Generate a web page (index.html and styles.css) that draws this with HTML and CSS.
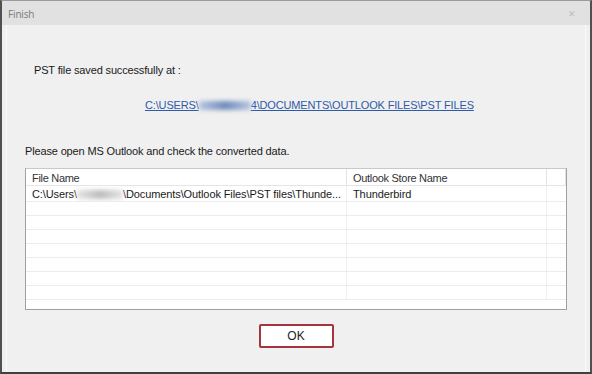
FILE: index.html
```html
<!DOCTYPE html>
<html lang="en">
<head>
    <meta charset="UTF-8">
    <title>Finish</title>
    <link rel="stylesheet" href="styles.css">
</head>
<body>
    <div class="window">
        <div class="titlebar">
            <span class="title">Finish</span>
            <span class="close">&#10005;</span>
        </div>
        <div class="content">
            <p class="saved">PST file saved successfully at :</p>
            <p class="path"><a href="#">C:\USERS\<span class="blur blue"></span>4\DOCUMENTS\OUTLOOK FILES\PST FILES</a></p>
            <p class="hint">Please open MS Outlook and check the converted data.</p>

            <div class="grid">
                <div class="row head">
                    <div class="c1">File Name</div>
                    <div class="c2">Outlook Store Name</div>
                    <div class="c3"></div>
                </div>
                <div class="row first">
                    <div class="c1">C:\Users\<span class="blur grey"></span>\Documents\Outlook Files\PST files\Thunde...</div>
                    <div class="c2">Thunderbird</div>
                    <div class="c3"></div>
                </div>
                <div class="row"><div class="c1"></div><div class="c2"></div><div class="c3"></div></div>
                <div class="row"><div class="c1"></div><div class="c2"></div><div class="c3"></div></div>
                <div class="row"><div class="c1"></div><div class="c2"></div><div class="c3"></div></div>
                <div class="row"><div class="c1"></div><div class="c2"></div><div class="c3"></div></div>
                <div class="row"><div class="c1"></div><div class="c2"></div><div class="c3"></div></div>
                <div class="row"><div class="c1"></div><div class="c2"></div><div class="c3"></div></div>
                <div class="row last"><div class="c1"></div><div class="c2"></div><div class="c3"></div></div>
            </div>

            <div class="actions">
                <button class="ok">OK</button>
            </div>
        </div>
    </div>
</body>
</html>
```

FILE: styles.css
```css
body {
    margin: 0;
    background-color: #f0f0f0;
    font-family: "Liberation Sans", Arial, sans-serif;
    font-size: 11px;
    letter-spacing: -0.15px;
    color: #1a1a1a;
}

.window {
    width: 592px;
    height: 374px;
    box-sizing: border-box;
    border-top: 1px solid #9a9a9a;
    border-left: 2px solid #505050;
    border-right: 2px solid #505050;
    border-bottom: 2px solid #404040;
    display: flex;
    flex-direction: column;
}

.titlebar {
    height: 24px;
    background-color: #e1e1e1;
    display: flex;
    justify-content: space-between;
    align-items: center;
    padding: 2px 14px 0 6px;
    box-sizing: border-box;
}

.title {
    color: #7a7a7a;
    font-family: "Open Sans", sans-serif;
    font-size: 10px;
}

.close {
    color: #bdbdbd;
    font-size: 9px;
}

.content {
    flex: 1;
    margin: 0 4px;
    border-left: 1px solid #fafafa;
    border-right: 1px solid #fafafa;
    background-color: #f0f0f0;
    display: flex;
    flex-direction: column;
}

.content p {
    margin: 0;
}

.saved {
    margin-top: 39px !important;
    padding-left: 27px;
}

.path {
    margin-top: 23px !important;
    padding-left: 138px;
}

.path a {
    color: #2e5aa8;
    text-decoration: underline;
}

.blur {
    display: inline-block;
    height: 9px;
    vertical-align: -1px;
    filter: blur(2px);
}

.blur.blue {
    width: 52px;
    background: linear-gradient(90deg, #b8c6de, #6f8bbd 50%, #b8c6de);
}

.blur.grey {
    width: 46px;
    background: linear-gradient(90deg, #e4e4e4, #bcbcbc 50%, #e4e4e4);
}

.hint {
    margin-top: 34px !important;
    padding-left: 18px;
}

.grid {
    margin: 11px 0 0 18px;
    width: 542px;
    height: 142px;
    box-sizing: border-box;
    border: 1px solid #a0a0a0;
    border-top-color: #c8c8c8;
    background-color: #fff;
    overflow: hidden;
    letter-spacing: -0.3px;
}

.row {
    display: flex;
    height: 13px;
    border-bottom: 1px solid #ececec;
}

.row > div {
    box-sizing: border-box;
    padding: 1px 0 0 6px;
    line-height: 15px;
    white-space: nowrap;
    overflow: hidden;
}

.row.first > div {
    letter-spacing: -0.1px;
}

.c1 {
    width: 321px;
    border-right: 1px solid #efefef;
}

.c2 {
    width: 200px;
    border-right: 1px solid #efefef;
}

.c3 {
    flex: 1;
}

.row.head {
    height: 16px;
    border-bottom: 1px solid #e5e5e5;
}

.row.head > div {
    line-height: 17px;
    color: #333;
    border-right: 1px solid #e3e3e3;
}

.row.first {
    height: 15px;
}

.actions {
    display: flex;
    justify-content: center;
    margin-top: 14px;
}

.ok {
    width: 75px;
    height: 24px;
    background-color: #fff;
    border: 2px solid #a4343e;
    border-radius: 2px;
    font-family: "Liberation Sans", Arial, sans-serif;
    font-size: 12px;
    color: #222;
}
```
